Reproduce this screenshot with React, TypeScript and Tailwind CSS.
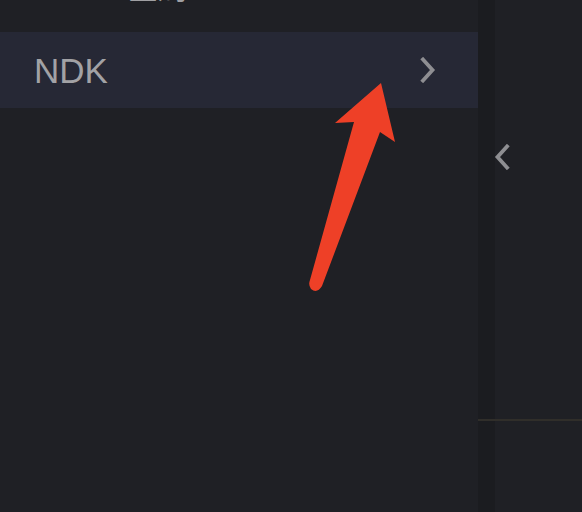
import React from 'react';

function Chevron({ dir }: { dir: 'left' | 'right' }) {
    return (
        <svg width="18" height="26" viewBox="0 0 18 26" fill="none">
            <path
                d={dir === 'right' ? 'M4 2.5 L13.5 13 L4 23.5' : 'M14 2.5 L4.5 13 L14 23.5'}
                stroke="#8e8e92"
                strokeWidth="3.8"
                strokeLinecap="square"
                strokeLinejoin="miter"
            />
        </svg>
    );
}

export default function App() {
    return (
        <div
            className="relative flex w-[582px] h-[512px] overflow-hidden bg-[#1f2025]"
            style={{ fontFamily: '"Liberation Sans", "Noto Sans CJK SC", sans-serif' }}
        >
            {/* Left list */}
            <div className="w-[478px] flex flex-col bg-[#1f2025]">
                <div className="h-[32px] relative overflow-hidden">
                    <span className="absolute left-[128px] top-[-26px] text-[30px] leading-none text-[#a0a0a3]">
                        全局
                    </span>
                </div>
                <div className="h-[76px] bg-[#262835] flex items-center justify-between pl-[34px] pr-[41px]">
                    <span className="text-[35px] text-[#a2a2a5] leading-none">NDK</span>
                    <Chevron dir="right" />
                </div>
            </div>

            {/* Right panel */}
            <div className="flex-1 flex">
                <div className="w-[17px] bg-[#1b1c20]" />
                <div className="flex-1" />
            </div>
            <div className="absolute left-[478px] right-0 top-[419px] h-[2px] bg-[#302e2a]" />
            <div className="absolute left-[493px] top-[144px]">
                <Chevron dir="left" />
            </div>

            {/* Annotation arrow */}
            <svg className="absolute inset-0 pointer-events-none" width="582" height="512" viewBox="0 0 582 512">
                <path
                    d="M381 83 L395 142 L380 132 L322 286 Q317 294 311 289 Q308 285 310 280 L354 122 L335 123 Z"
                    fill="#ee4027"
                />
            </svg>
        </div>
    );
}
